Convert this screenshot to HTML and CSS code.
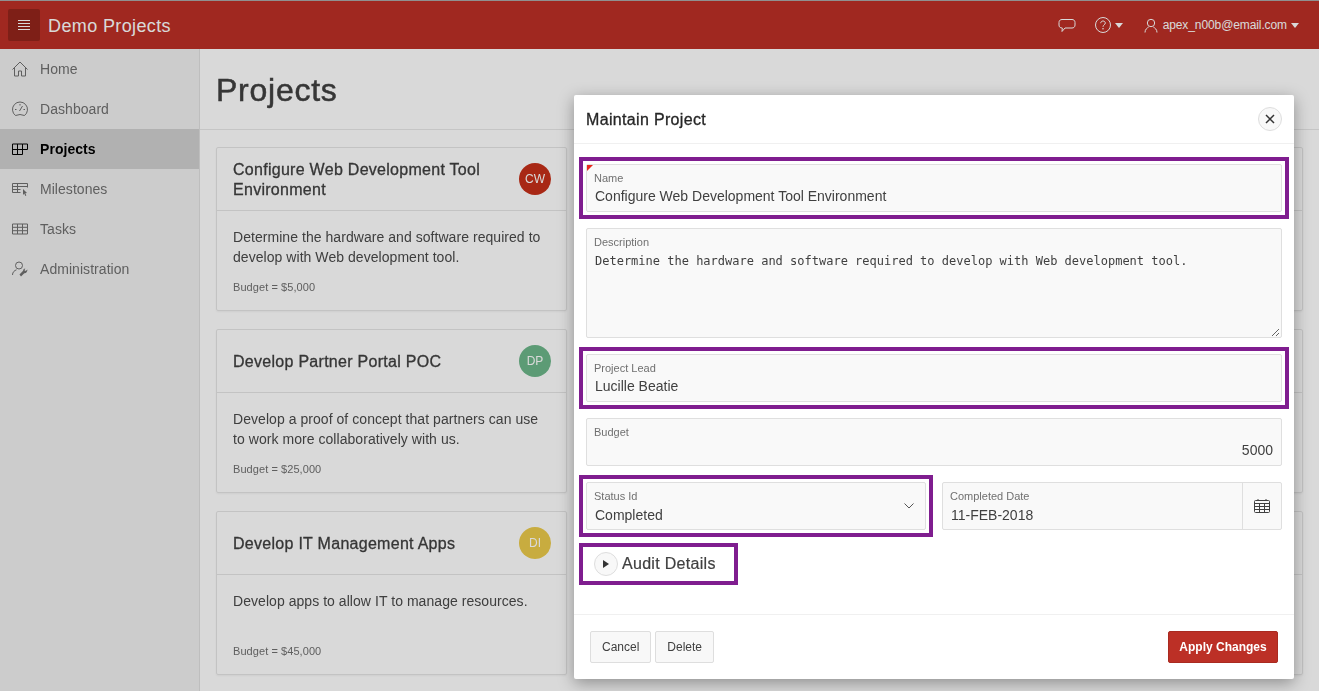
FILE: index.html
```html
<!DOCTYPE html>
<html lang="en">
<head>
    <meta charset="UTF-8">
    <meta name="viewport" content="width=device-width, initial-scale=1.0">
    <title>Projects</title>
    <link rel="stylesheet" href="styles.css">
</head>
<body>
    <header class="topbar">
        <button class="menu-btn" aria-label="Menu">
            <svg width="16" height="16" viewBox="0 0 16 16"><path d="M2 3.500h12M2 6.500h12M2 9.500h12M2 12.500h12" stroke="currentColor" fill="none"/></svg>
        </button>
        <span class="app-name">Demo Projects</span>
        <nav class="top-links">
            <svg class="chat-icon" width="18" height="16" viewBox="0 0 18 16"><path d="M4 1.500h10c1.700 0 3 1 3 3v2.500c0 2-1.300 3-3 3H7L4 13.500l.3-3.500C2 10 1 8.800 1 7V4.500c0-2 1.300-3 3-3z" stroke="currentColor" fill="none"/></svg>
            <svg class="help-icon" width="16" height="16" viewBox="0 0 16 16"><circle cx="8" cy="8" r="7.500" stroke="currentColor" fill="none"/><path d="M5.700 6.200C5.800 4.800 6.800 4 8 4c1.300 0 2.300.8 2.300 2 0 1.800-2.300 1.800-2.300 3.800" stroke="currentColor" fill="none"/><circle cx="8" cy="11.800" r=".8" fill="currentColor"/></svg>
            <span class="caret"></span>
            <svg class="user-icon" width="14" height="15" viewBox="0 0 14 15"><circle cx="7" cy="5" r="3.700" stroke="currentColor" fill="none"/><path d="M1 14.500c0-3 2-4.500 3.700-5.500M13 14.500c0-3-2-4.500-3.700-5.500" stroke="currentColor" fill="none"/></svg>
            <span class="user-name">apex_n00b@email.com</span>
            <span class="caret"></span>
        </nav>
    </header>

    <div class="layout">
        <aside class="sidebar">
            <a class="nav-item">
                <svg width="16" height="16" viewBox="0 0 16 16"><path d="M.5 8.500L8 1l7.500 7.500M2.500 7v8h4v-5h3v5h4V7" stroke="currentColor" fill="none"/></svg>
                Home
            </a>
            <a class="nav-item">
                <svg width="16" height="16" viewBox="0 0 16 16"><path d="M3.500 14.500a7.500 7.500 0 1 1 9 0" stroke="currentColor" fill="none"/><path d="M3.500 14.500q4.500-2 9 0" stroke="currentColor" fill="none"/><path d="M7.500 10l3-5M3 8.500h1.500M8 3v1.500M13 8.500h-1.500" stroke="currentColor" fill="none"/></svg>
                Dashboard
            </a>
            <a class="nav-item active">
                <svg width="16" height="16" viewBox="0 0 16 16"><path d="M.5 3h10v10.500H.5zM.5 8.500h15V3h-5M5.500 3v10.500" stroke="currentColor" fill="none"/></svg>
                Projects
            </a>
            <a class="nav-item">
                <svg width="16" height="16" viewBox="0 0 16 16"><path d="M8.500 11.500H.5v-9h15v4M.5 5.500h15M.5 8.500h8M5.500 2.500v9" stroke="currentColor" fill="none"/><path d="M11 8l4 4-1.700.2 1 2.400-1 .4-1-2.400L11 14z" fill="currentColor"/></svg>
                Milestones
            </a>
            <a class="nav-item">
                <svg width="16" height="16" viewBox="0 0 16 16"><path d="M.5 3h15v10H.5zM.5 6.300h15M.5 9.700h15M5.500 3v10M10.500 3v10" stroke="currentColor" fill="none"/></svg>
                Tasks
            </a>
            <a class="nav-item">
                <svg width="16" height="16" viewBox="0 0 16 16"><circle cx="7" cy="4.500" r="3.500" stroke="currentColor" fill="none"/><path d="M.5 14c0-3 2-4.500 4-5.200" stroke="currentColor" fill="none"/><path d="M15.500 8.500l-2 1.500-1-.8.8-1.700c-1.400 0-2.300 1-2.200 2.300L7.500 13.500 9 15.500l3.300-3.300c1.800.2 3-1.300 3.200-3.700z" fill="currentColor"/></svg>
                Administration
            </a>
        </aside>

        <main class="content">
            <div class="page-head"><h1>Projects</h1></div>
            <div class="cards">
                <section class="card">
                    <div class="card-head">
                        <h3>Configure Web Development Tool Environment</h3>
                        <span class="avatar red">CW</span>
                    </div>
                    <div class="card-body">
                        <p>Determine the hardware and software required to develop with Web development tool.</p>
                        <small>Budget = $5,000</small>
                    </div>
                </section>
                <section class="card blank"><div class="card-head"></div></section>
                <section class="card blank"><div class="card-head"></div></section>

                <section class="card">
                    <div class="card-head">
                        <h3>Develop Partner Portal POC</h3>
                        <span class="avatar green">DP</span>
                    </div>
                    <div class="card-body">
                        <p>Develop a proof of concept that partners can use to work more collaboratively with us.</p>
                        <small>Budget = $25,000</small>
                    </div>
                </section>
                <section class="card blank"><div class="card-head"></div></section>
                <section class="card blank"><div class="card-head"></div></section>

                <section class="card">
                    <div class="card-head">
                        <h3>Develop IT Management Apps</h3>
                        <span class="avatar yellow">DI</span>
                    </div>
                    <div class="card-body">
                        <p>Develop apps to allow IT to manage resources.</p>
                        <small>Budget = $45,000</small>
                    </div>
                </section>
                <section class="card blank"><div class="card-head"></div></section>
                <section class="card blank"><div class="card-head"></div></section>
            </div>
        </main>
    </div>

    <div class="overlay"></div>

    <div class="modal">
        <div class="modal-head">
            <h2>Maintain Project</h2>
            <button class="close-btn" aria-label="Close">
                <svg width="10" height="10" viewBox="0 0 10 10"><path d="M1 1l8 8M9 1l-8 8" stroke="currentColor" stroke-width="1.500" fill="none"/></svg>
            </button>
        </div>

        <div class="modal-body">
            <div class="field marked required">
                <label for="name">Name</label>
                <input id="name" type="text" value="Configure Web Development Tool Environment">
            </div>
            <div class="field area">
                <label for="description">Description</label>
                <textarea id="description">Determine the hardware and software required to develop with Web development tool.</textarea>
            </div>
            <div class="field marked">
                <label for="lead">Project Lead</label>
                <input id="lead" type="text" value="Lucille Beatie">
            </div>
            <div class="field">
                <label for="budget">Budget</label>
                <input id="budget" class="num" type="text" value="5000">
            </div>
            <div class="two-cols">
                <div class="field marked">
                    <label for="status">Status Id</label>
                    <input id="status" type="text" value="Completed">
                    <svg class="chevron" width="10" height="6" viewBox="0 0 10 6"><path d="M.5.5L5 5 9.500.5" stroke="currentColor" fill="none"/></svg>
                </div>
                <div class="field with-addon">
                    <div class="field-main">
                        <label for="completed">Completed Date</label>
                        <input id="completed" type="text" value="11-FEB-2018">
                    </div>
                    <button class="addon" aria-label="Pick date">
                        <svg width="16" height="14" viewBox="0 0 16 14"><path d="M1.500 1.500h13a1 1 0 0 1 1 1v10a1 1 0 0 1-1 1h-13a1 1 0 0 1-1-1v-10a1 1 0 0 1 1-1zM.5 4.500h15M.5 7.500h15M.5 10.500h15M5.500 4.500v9M10.500 4.500v9M4 0v1.500M12 0v1.500" stroke="currentColor" fill="none"/></svg>
                    </button>
                </div>
            </div>
            <div class="audit marked">
                <span class="audit-toggle">
                    <svg width="6" height="8" viewBox="0 0 6 8"><path d="M0 0l6 4-6 4z" fill="currentColor"/></svg>
                </span>
                <span class="audit-title">Audit Details</span>
            </div>
        </div>

        <div class="modal-foot">
            <button class="btn">Cancel</button>
            <button class="btn">Delete</button>
            <button class="btn primary">Apply Changes</button>
        </div>
    </div>
</body>
</html>
```

FILE: styles.css
```css
* {
    box-sizing: border-box;
}
html, body {
    height: 100%;
}
body {
    margin: 0;
    font-family: "Liberation Sans", Arial, sans-serif;
    font-size: 14px;
    color: #404040;
    background: #fff;
    overflow: hidden;
}

/* top bar */
.topbar {
    height: 49px;
    display: flex;
    align-items: center;
    padding: 0 20px 0 8px;
    background: #bc3026;
    border-top: 1px solid #aaa;
    color: #fff;
}
.menu-btn {
    width: 32px;
    height: 32px;
    display: flex;
    align-items: center;
    justify-content: center;
    padding: 0;
    border: none;
    border-radius: 2px;
    background: #94251c;
    color: #fff;
}
.app-name {
    margin-left: 8px;
    padding-top: 2px;
    font-size: 18px;
    letter-spacing: .38px;
}
.top-links {
    margin-left: auto;
    display: flex;
    align-items: center;
}
.chat-icon {
    margin: 2px 19px 0 0;
}
.caret {
    width: 0;
    height: 0;
    margin-left: 4px;
    border-left: 4px solid transparent;
    border-right: 4px solid transparent;
    border-top: 5px solid #fff;
}
.user-icon {
    margin-left: 21px;
    margin-right: 5px;
}
.user-name {
    font-size: 12px;
    letter-spacing: -.1px;
}

/* page */
.layout {
    display: flex;
    height: calc(100% - 49px);
    will-change: transform;
}
.sidebar {
    width: 200px;
    flex: none;
    background: #f0f0f0;
    border-right: 1px solid #e0e0e0;
}
.nav-item {
    height: 40px;
    display: flex;
    align-items: center;
    gap: 12px;
    padding-left: 12px;
    color: #707070;
    letter-spacing: .05px;
}
.nav-item.active {
    background: #d1d1d1;
    color: #000;
    font-weight: bold;
}
.content {
    flex: 1;
    min-width: 0;
}
.page-head {
    height: 81px;
    display: flex;
    align-items: center;
    padding: 2px 0 0 16px;
    border-bottom: 1px solid #e8e8e8;
}
.page-head h1 {
    margin: 0;
    font-size: 32px;
    font-weight: normal;
    letter-spacing: .75px;
    -webkit-text-stroke: .5px #404040;
}
.cards {
    display: grid;
    grid-template-columns: repeat(3, 351px);
    grid-auto-rows: 164px;
    gap: 18px 17px;
    padding: 17px 0 0 16px;
}
.card {
    border: 1px solid #e6e6e6;
    border-radius: 2px;
    background: #fff;
    box-shadow: 0 1px 2px rgba(0, 0, 0, .05);
}
.card-head {
    height: 63px;
    display: flex;
    align-items: center;
    justify-content: space-between;
    padding: 0 15px 0 16px;
    border-bottom: 1px solid #e6e6e6;
}
.card-head h3 {
    margin: 0;
    width: 270px;
    padding-top: 1px;
    font-size: 16px;
    line-height: 20px;
    font-weight: normal;
    letter-spacing: .28px;
    -webkit-text-stroke: .3px #404040;
}
.avatar {
    width: 32px;
    height: 32px;
    flex: none;
    display: flex;
    align-items: center;
    justify-content: center;
    border-radius: 50%;
    font-size: 12px;
    color: #fff;
}
.avatar.red {
    background: #c63019;
}
.avatar.green {
    background: #6db78a;
}
.avatar.yellow {
    background: #eccb4b;
}
.card-body {
    padding: 16px 16px 0;
}
.card-body p {
    margin: 0;
    height: 40px;
    line-height: 20px;
    letter-spacing: .05px;
    color: #4a4a4a;
}
.card-body small {
    display: block;
    margin-top: 12px;
    font-size: 11px;
    line-height: 16px;
    letter-spacing: .07px;
    color: #707070;
}

/* dialog */
.overlay {
    position: fixed;
    inset: 0;
    background: rgba(0, 0, 0, .15);
}
.modal {
    position: absolute;
    top: 95px;
    left: 574px;
    width: 720px;
    height: 584px;
    display: flex;
    flex-direction: column;
    background: #fff;
    border-radius: 2px;
    box-shadow: 0 4px 16px rgba(0, 0, 0, .35);
    will-change: transform;
}
.modal-head {
    height: 49px;
    flex: none;
    display: flex;
    align-items: center;
    justify-content: space-between;
    padding: 0 12px;
    border-bottom: 1px solid #f0f0f0;
}
.modal-head h2 {
    margin: 0;
    padding-top: 2px;
    font-size: 16px;
    font-weight: normal;
    letter-spacing: .33px;
    color: #262626;
    -webkit-text-stroke: .3px #262626;
}
.close-btn {
    width: 24px;
    height: 24px;
    display: flex;
    align-items: center;
    justify-content: center;
    padding: 0;
    border: 1px solid #dedede;
    border-radius: 50%;
    background: #f8f8f8;
    color: #333;
}
.modal-body {
    flex: 1;
    display: flex;
    flex-direction: column;
    gap: 16px;
    padding: 20px 12px 0;
}
.field {
    position: relative;
    height: 48px;
    flex: none;
    padding: 6px 8px 0 7px;
    border: 1px solid #dfdfdf;
    border-radius: 2px;
    background: #f9f9f9;
}
.field label {
    display: block;
    height: 14px;
    font-size: 11px;
    line-height: 14px;
    color: #707070;
}
.field input,
.field textarea {
    display: block;
    width: 100%;
    margin: 2px 0 0;
    padding: 0 0 0 1px;
    border: none;
    outline: none;
    background: transparent;
    font-family: inherit;
    font-size: 14px;
    line-height: 18px;
    height: 18px;
    color: #404040;
}
.field.area {
    height: 110px;
}
.field textarea {
    width: calc(100% + 7px);
    height: 83px;
    margin: 5px -7px 0 0;
    font-family: "DejaVu Sans Mono", monospace;
    font-size: 12px;
    line-height: 14px;
}
.field input.num {
    text-align: right;
}
/* purple callouts drawn round a field */
.marked {
    position: relative;
}
.marked::after {
    content: "";
    position: absolute;
    inset: -8px;
    border: 4px solid #7f1d8f;
    pointer-events: none;
}
.audit.marked::after {
    inset: -7px;
}
.required::before {
    content: "";
    position: absolute;
    top: 0;
    left: 0;
    border-top: 6px solid #e8281c;
    border-right: 6px solid transparent;
}
.two-cols {
    display: grid;
    grid-template-columns: 340px 340px;
    gap: 16px;
}
.two-cols input {
    margin-top: 3px;
}
.chevron {
    position: absolute;
    top: 20px;
    right: 11px;
    color: #555;
}
.with-addon {
    display: flex;
    padding: 0;
}
.field-main {
    flex: 1;
    padding: 6px 8px 0 7px;
}
.addon {
    width: 39px;
    display: flex;
    align-items: center;
    justify-content: center;
    padding: 0;
    border: none;
    border-left: 1px solid #dfdfdf;
    background: transparent;
    color: #404040;
}
.audit {
    width: 145px;
    height: 28px;
    margin-top: 4px;
    display: flex;
    align-items: center;
    gap: 4px;
    padding: 0 0 0 8px;
}
.audit-toggle {
    width: 24px;
    height: 24px;
    flex: none;
    display: flex;
    align-items: center;
    justify-content: center;
    border: 1px solid #dedede;
    border-radius: 50%;
    background: #f8f8f8;
    color: #333;
}
.audit-title {
    font-size: 16px;
    letter-spacing: .3px;
    -webkit-text-stroke: .2px #404040;
}
.modal-foot {
    height: 65px;
    flex: none;
    display: flex;
    gap: 4px;
    padding: 16px;
    border-top: 1px solid #f0f0f0;
}
.btn {
    height: 32px;
    padding: 0 11px;
    border: 1px solid #dedede;
    border-radius: 2px;
    background: #f8f8f8;
    font-family: inherit;
    font-size: 12px;
    color: #404040;
}
.btn.primary {
    width: 110px;
    padding: 0;
    margin-left: auto;
    border-color: #a92a20;
    background: #bc3026;
    color: #fff;
    font-weight: bold;
}
```
